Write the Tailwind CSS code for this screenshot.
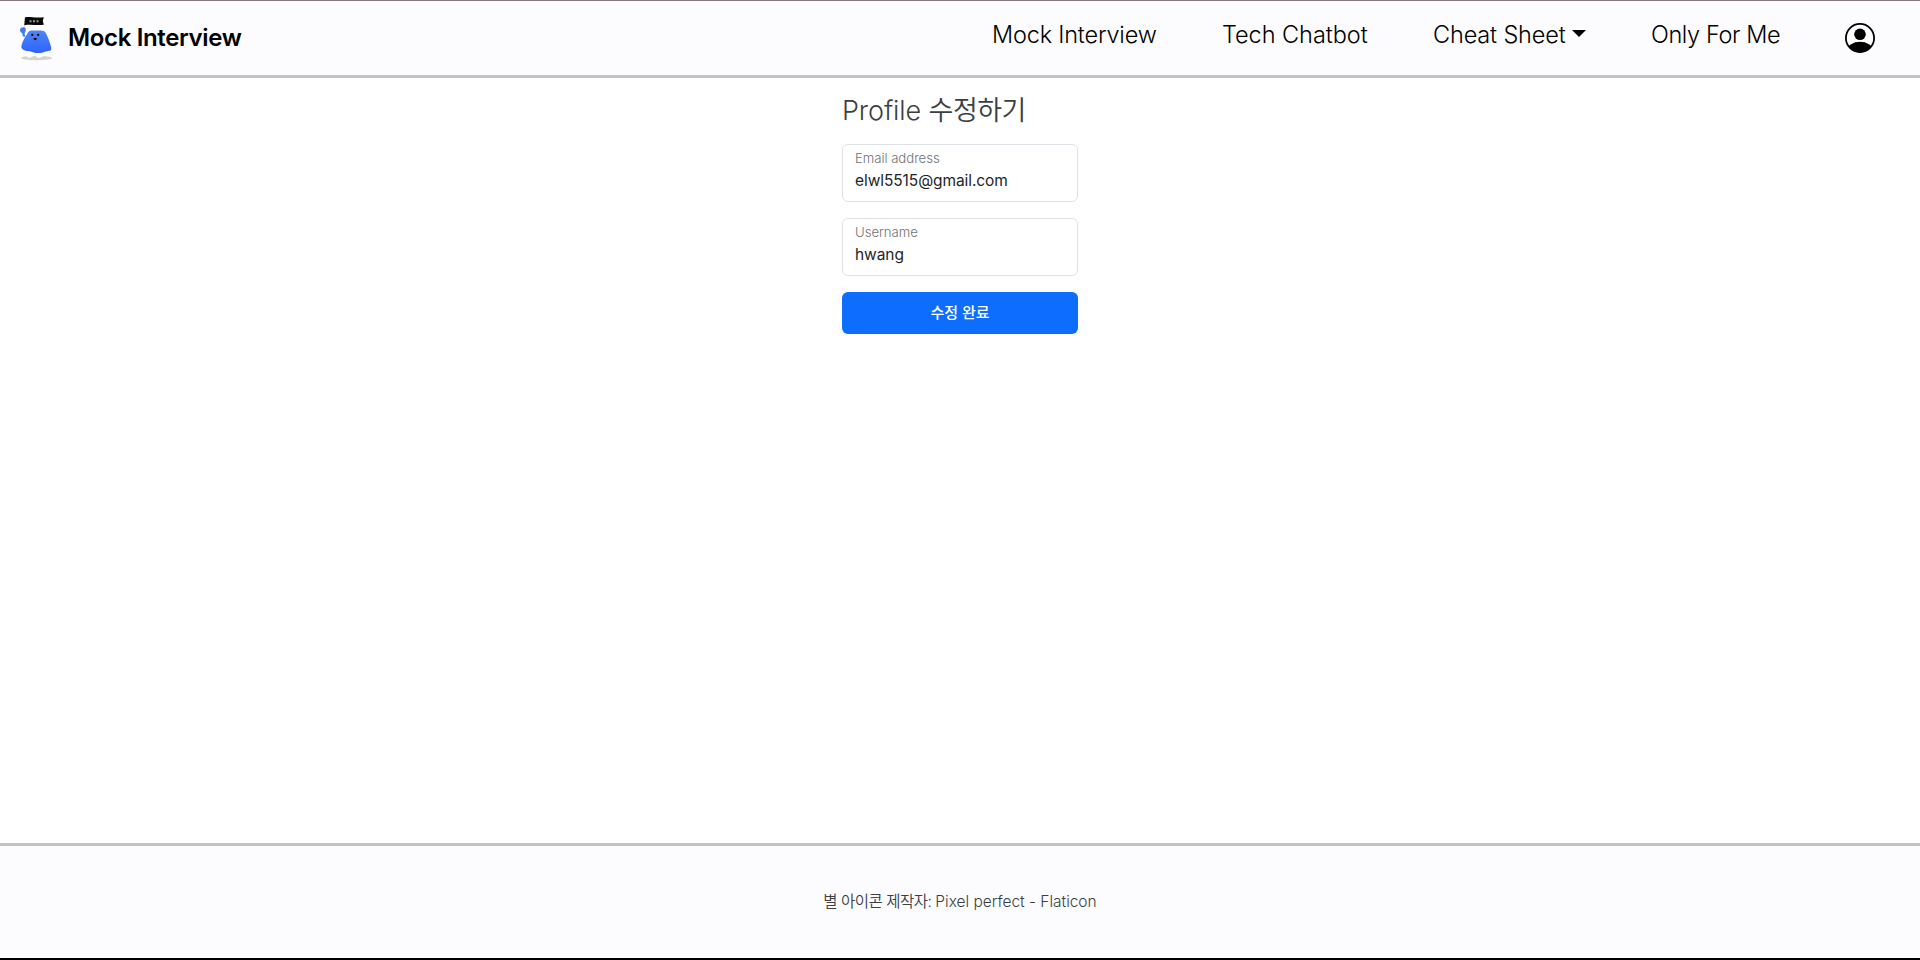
<!DOCTYPE html>
<html lang="ko">
<head>
<meta charset="utf-8">
<title>Mock Interview</title>
<script src="https://cdn.jsdelivr.net/npm/@tailwindcss/browser@4"></script>
</head>
<body class="flex h-screen flex-col overflow-hidden border-t border-t-[#857a84] border-b-2 border-b-black bg-white font-['Inter','Noto_Sans_CJK_KR',sans-serif] font-[350] text-[#212529]">
<header class="flex h-[77px] shrink-0 items-center border-b-3 border-[#c2c2c2] bg-[#fcfcff] pl-[18px] text-black">
  <a class="flex items-center" href="#">
    <svg class="h-[46px] w-[36px]" viewBox="18 15 36 46">
      <defs><linearGradient id="body" x1="0" y1="0" x2="0" y2="1"><stop offset="0" stop-color="#4c86f5"/><stop offset="1" stop-color="#2e62ff"/></linearGradient></defs>
      <ellipse cx="36.5" cy="58" rx="15.5" ry="2.2" fill="#d3d3d5"/>
      <path d="M25 16.500 24 30" stroke="#d5d5da" stroke-width=".8"/>
      <path d="M25 17.500c4-1.200 10 .8 18.800-.3l-1 3.600 1 4c-8 .900-13-.8-19.500.5z" fill="#090909"/>
      <path d="M29.500 20.300h2v2h-2zM33 20.300h2v2h-2zM36.500 20.300h2v2h-2z" fill="#999"/>
      <path d="M28 31.500c0-3 4-4.500 8.500-4.500s9 2 9.500 5z" fill="#fff"/>
      <path d="M27.500 52h5l1.500 4-5 2-2-1zM38 51.500h4l1 5-4 1.500-3-1z" fill="#fff"/>
      <path d="M20.300 31.500c-.8-2.300.3-4.300 2.500-4 1.300-.8 3.200.3 3 2.200-.1 2-.6 2.900-1.300 3.600l.8 3.700-2.500-.8-.6-3.200c-.9-.1-1.500-.7-1.900-1.500z" fill="#407bf2"/>
      <path d="M27.500 33.200c1-2.400 3-2.700 5-2.700h8.500c2.700 0 4.200 1 5.200 3.200 2.300 4.500 3.800 9.300 4.900 13.300.7 3-.5 4-3 4.100-3.500.2-4.500 2-9.500 2-5.500 0-6.500-2-10.500-2.200-4-.1-7.300-2-6.700-5 .8-4.500 4-9 6.100-12.700z" fill="url(#body)"/>
      <circle cx="32.300" cy="34.900" r="1.100"/><circle cx="38.200" cy="34.900" r="1.100"/><path d="M33.500 38h3.400q-.4 2.300-1.700 2.300t-1.700-2.300"/>
    </svg>
    <span class="ml-[14px] text-[24px] leading-9 font-semibold tracking-[-0.350px] whitespace-nowrap">Mock Interview</span>
  </a>
  <nav class="mr-[45px] ml-auto flex items-center text-[23.5px] leading-9 tracking-[-0.200px] whitespace-nowrap">
    <a class="w-[230px] pb-[6px]" href="#">Mock Interview</a>
    <a class="w-[211px] pb-[6px] tracking-[-0.050px]" href="#">Tech Chatbot</a>
    <a class="flex w-[218px] items-center pb-[6px] tracking-[-0.150px]" href="#"><span class="w-[139px]">Cheat Sheet</span><svg class="mb-[3px] h-[7px] w-[14px]" viewBox="0 0 14 7"><path d="M0 0h14L7 7z"/></svg></a>
    <a class="w-[194px] pb-[6px] tracking-[-0.400px]" href="#">Only For Me</a>
    <svg class="size-[30px]" viewBox="0 0 30 30"><defs><clipPath id="disc"><circle cx="15" cy="15" r="14.500"/></clipPath></defs><circle cx="15" cy="15" r="14.100" fill="#fff" stroke="#000" stroke-width="1.800"/><circle cx="15" cy="11.300" r="5.800"/><ellipse cx="15" cy="27" rx="12.500" ry="8.200" clip-path="url(#disc)"/></svg>
  </nav>
</header>
<main class="mx-auto w-[236px] flex-1 pt-4">
  <h1 class="mb-[17px] text-[27px] leading-[33px] whitespace-nowrap text-[#3b3f43]"><span class="tracking-[-0.100px]">Profile </span><span class="tracking-[-0.500px]">수정하기</span></h1>
  <div class="mb-4 h-[58px] rounded-md border border-[#dee2e6] px-3 pt-1">
    <label class="block text-[13.200px] leading-[18px] tracking-[-0.050px] text-[#707376]" for="email">Email address</label>
    <input id="email" class="mt-[2px] block h-6 w-full bg-transparent text-[15.500px] leading-6 font-[380] tracking-[-0.080px] outline-none" value="elwl5515@gmail.com">
  </div>
  <div class="mb-4 h-[58px] rounded-md border border-[#dee2e6] px-3 pt-1">
    <label class="block text-[13.200px] leading-[18px] tracking-[-0.050px] text-[#707376]" for="name">Username</label>
    <input id="name" class="mt-[2px] block h-6 w-full bg-transparent text-[15.500px] leading-6 font-[380] tracking-[-0.080px] outline-none" value="hwang">
  </div>
  <button class="block h-[42px] w-full rounded-md bg-[#0d6efd] text-[15px] font-medium text-white">수정 완료</button>
</main>
<footer class="flex h-[115px] shrink-0 items-center justify-center border-t-3 border-[#c2c2c2] bg-[#fcfcff] text-[15.500px] leading-6 text-[#3b3f43]">
  <p class="whitespace-nowrap"><span class="tracking-[-0.480px]">별 아이콘 제작자: </span><span class="tracking-[-0.020px]">Pixel perfect - Flaticon</span></p>
</footer>
</body>
</html>
